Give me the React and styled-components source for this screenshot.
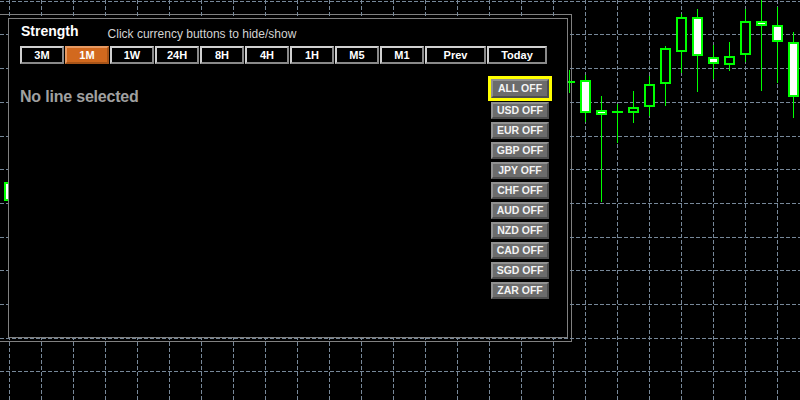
import React from "react";
import styled, { createGlobalStyle, css } from "styled-components";

const Global = createGlobalStyle`
  html, body { margin: 0; padding: 0; background: #000; }
  * { box-sizing: border-box; }
`;

const Page = styled.div`
  position: relative;
  width: 800px;
  height: 400px;
  overflow: hidden;
  background: #000;
  padding-top: 14px;
  font-family: "Liberation Sans", Arial, sans-serif;
`;

const ChartLayer = styled.svg`
  position: absolute;
  left: 0;
  top: 0;
  z-index: 1;
  pointer-events: none;
`;

const Frame = styled.div`
  position: relative;
  margin-left: -4px;
  width: 576px;
  height: 328px;
  border: 1px solid #808080;
  padding: 3px 3px 3px 11px;
`;

const Panel = styled.div`
  position: relative;
  z-index: 2;
  height: 100%;
  border: 1px solid #808080;
  background: #000;
  padding: 0 15px 0 11px;
  display: flex;
  flex-direction: column;
`;

const Header = styled.div`
  display: flex;
  align-items: flex-start;
  height: 16px;
  margin: 4px 0 0 1px;
`;

const Title = styled.div`
  color: #fff;
  font-weight: bold;
  font-size: 14px;
  line-height: 16px;
`;

const Hint = styled.div`
  color: #d3d3d3;
  font-size: 12px;
  line-height: 14px;
  margin: 4px 0 0 29px;
`;

const TabRow = styled.div`
  display: flex;
  gap: 1px;
  margin-top: 7px;
`;

const Tab = styled.div`
  width: ${(p) => p.$w || 44}px;
  height: 18px;
  border: 2px solid;
  border-color: #d0d0d0 #8a8a8a #8a8a8a #d0d0d0;
  background: #000;
  color: #fff;
  font-weight: bold;
  font-size: 11px;
  line-height: 14px;
  text-align: center;
  ${(p) =>
    p.$active &&
    css`
      background: #d2691e;
      border-color: #e89a62 #a85418 #a85418 #e89a62;
    `}
`;

const Body = styled.div`
  display: flex;
  margin-top: 12px;
`;

const Message = styled.div`
  flex: 1;
  margin-top: 12px;
  color: #a0a0a0;
  font-weight: bold;
  font-size: 16px;
  line-height: 18px;
  letter-spacing: -0.2px;
`;

const CurrencyColumn = styled.div`
  width: 64px;
  display: flex;
  flex-direction: column;
  align-items: center;
  gap: 3px;
`;

const Highlight = styled.div`
  width: 64px;
  height: 25px;
  border: 3px solid #ffff00;
  margin-bottom: -2px;
`;

const CurrencyButton = styled.div`
  width: 58px;
  height: ${(p) => (p.$tall ? 19 : 17)}px;
  border: 2px solid;
  border-color: #919191 #4e4e4e #4e4e4e #919191;
  background: #6c6c6c;
  color: #f4f4f4;
  font-weight: bold;
  font-size: 10.5px;
  line-height: ${(p) => (p.$tall ? 15 : 13)}px;
  text-align: center;
  white-space: nowrap;
`;

const tabs = [
  { label: "3M" },
  { label: "1M", active: true },
  { label: "1W" },
  { label: "24H" },
  { label: "8H" },
  { label: "4H" },
  { label: "1H" },
  { label: "M5" },
  { label: "M1" },
  { label: "Prev", w: 61 },
  { label: "Today", w: 60 },
];

const currencies = ["USD", "EUR", "GBP", "JPY", "CHF", "AUD", "NZD", "CAD", "SGD", "ZAR"];

const vLines = Array.from({ length: 25 }, (_, i) => 9 + 32 * i);
const hLines = [1, 34, 68, 102, 136, 169, 203, 237, 270, 304, 338, 371];

// c, wickTop, wickBot, bodyTop, bodyBot, kind
const candles = [
  [9, 175, 210, 182, 201, "w"],
  [569, 70, 93, 81, 83, "d"],
  [585, 75, 122, 80, 113, "w"],
  [601, 96, 202, 110, 115, "w"],
  [617, 104, 143, 111, 113, "d"],
  [633, 91, 123, 107, 113, "b"],
  [649, 76, 116, 84, 107, "b"],
  [665, 46, 106, 48, 84, "b"],
  [681, 14, 73, 17, 52, "b"],
  [697, 9, 92, 17, 56, "w"],
  [713, 45, 79, 57, 64, "w"],
  [729, 42, 71, 56, 65, "b"],
  [745, 9, 62, 21, 55, "b"],
  [761, 0, 91, 21, 26, "w"],
  [777, 7, 83, 25, 42, "w"],
  [793, 32, 118, 42, 97, "w"],
];

const GREEN = "#00ff00";

function Chart() {
  return (
    <ChartLayer width="800" height="400" viewBox="0 0 800 400" shapeRendering="crispEdges">
      {vLines.map((x) => (
        <line key={"v" + x} x1={x + 0.5} y1={0} x2={x + 0.5} y2={400} stroke="#778899" strokeDasharray="4 2" />
      ))}
      {hLines.map((y) => (
        <line key={"h" + y} x1={0} y1={y + 0.5} x2={800} y2={y + 0.5} stroke="#778899" strokeDasharray="4 2" />
      ))}
      {candles.map(([c, wt, wb, bt, bb, k]) => (
        <g key={"c" + c}>
          <rect x={c} y={wt} width={1} height={wb - wt} fill={GREEN} />
          {k === "d" ? (
            <rect x={c - 5} y={bt} width={11} height={bb - bt} fill={GREEN} />
          ) : (
            <rect
              x={c - 4}
              y={bt + 1}
              width={9}
              height={bb - bt - 2}
              fill={k === "w" ? "#fff" : "#000"}
              stroke={GREEN}
              strokeWidth={2}
            />
          )}
        </g>
      ))}
    </ChartLayer>
  );
}

export default function App() {
  return (
    <>
      <Global />
      <Page>
        <Chart />
        <Frame>
          <Panel>
            <Header>
              <Title>Strength</Title>
              <Hint>Click currency buttons to hide/show</Hint>
            </Header>
            <TabRow>
              {tabs.map((t) => (
                <Tab key={t.label} $active={t.active} $w={t.w}>
                  {t.label}
                </Tab>
              ))}
            </TabRow>
            <Body>
              <Message>No line selected</Message>
              <CurrencyColumn>
                <Highlight>
                  <CurrencyButton $tall>ALL OFF</CurrencyButton>
                </Highlight>
                {currencies.map((c) => (
                  <CurrencyButton key={c}>{c} OFF</CurrencyButton>
                ))}
              </CurrencyColumn>
            </Body>
          </Panel>
        </Frame>
      </Page>
    </>
  );
}
